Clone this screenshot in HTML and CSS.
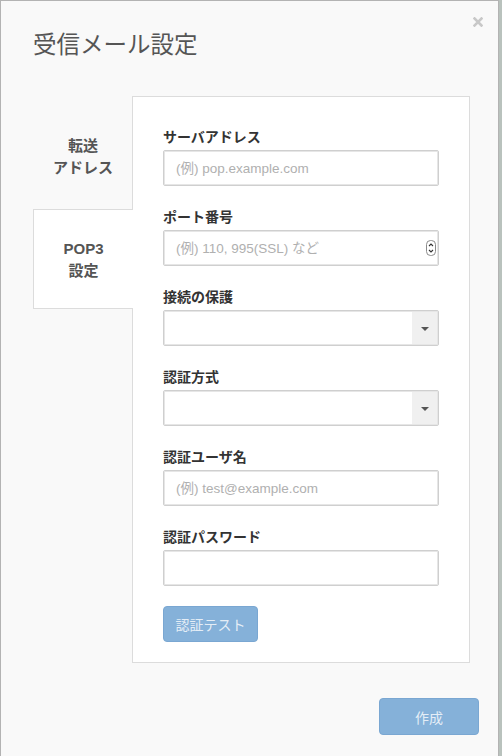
FILE: index.html
```html
<!DOCTYPE html>
<html lang="ja">
<head>
<meta charset="utf-8">
<title>受信メール設定</title>
<link rel="stylesheet" href="styles.css">
</head>
<body>
<div class="modal">
  <div class="modal-header">
    <h1 class="modal-title">受信メール設定</h1>
    <span class="close">
      <svg width="10" height="10" viewBox="0 0 10 10"><path d="M1.5 1.5 L8.5 8.5 M8.5 1.5 L1.5 8.5" stroke="#c8c8c8" stroke-width="2.6" stroke-linecap="square"/></svg>
    </span>
  </div>
  <div class="modal-body">
    <div class="tabs">
      <div class="tab">転送<br>アドレス</div>
      <div class="tab active">POP3<br>設定</div>
    </div>
    <div class="panel">
      <div class="field">
        <label class="label">サーバアドレス</label>
        <input class="input" type="text" placeholder="(例) pop.example.com">
      </div>
      <div class="field">
        <label class="label">ポート番号</label>
        <div class="input-wrap">
          <input class="input" type="text" placeholder="(例) 110, 995(SSL) など">
          <span class="spinner">
            <svg width="10" height="16" viewBox="0 0 10 16"><rect x="0.5" y="0.5" width="9" height="15" rx="4" fill="#fff" stroke="#8a8a8a"/><path d="M3 6 L5 4 L7 6 M3 10 L5 12 L7 10" fill="none" stroke="#333" stroke-width="1.1"/></svg>
          </span>
        </div>
      </div>
      <div class="field">
        <label class="label">接続の保護</label>
        <div class="select"><span class="select-value"></span><span class="select-arrow"><span class="caret"></span></span></div>
      </div>
      <div class="field">
        <label class="label">認証方式</label>
        <div class="select"><span class="select-value"></span><span class="select-arrow"><span class="caret"></span></span></div>
      </div>
      <div class="field">
        <label class="label">認証ユーザ名</label>
        <input class="input" type="text" placeholder="(例) test@example.com">
      </div>
      <div class="field">
        <label class="label">認証パスワード</label>
        <input class="input" type="password">
      </div>
      <button class="btn btn-small" type="button">認証テスト</button>
    </div>
  </div>
  <div class="modal-footer">
    <button class="btn btn-create" type="button">作成</button>
  </div>
</div>
</body>
</html>
```

FILE: styles.css
```css
html, body {
  margin: 0;
  padding: 0;
}
body {
  background: #b9c2bd;
  font-family: "Liberation Sans", "Noto Sans CJK JP", sans-serif;
  width: 502px;
  height: 756px;
  overflow: hidden;
}
.modal {
  box-sizing: border-box;
  width: 499px;
  height: 756px;
  background: #f9f9f9;
  border: 1px solid #b3b3b3;
  border-bottom: none;
  position: relative;
}
.modal-header {
  height: 95px;
  padding-left: 32px;
  box-sizing: border-box;
  padding-top: 27px;
}
.modal-title {
  margin: 0;
  font-family: "Noto Sans CJK JP", sans-serif;
  font-size: 23.5px;
  font-weight: 400;
  color: #555;
  line-height: 30px;
}
.close {
  position: absolute;
  top: 16px;
  left: 472px;
  width: 10px;
  height: 10px;
  display: block;
}
.close svg { display: block; }
.modal-body {
  display: flex;
  padding-left: 32px;
}
.tabs {
  width: 100px;
  margin-right: -1px;
  display: flex;
  flex-direction: column;
  position: relative;
  z-index: 1;
}
.tab {
  box-sizing: border-box;
  height: 113px;
  display: flex;
  align-items: center;
  justify-content: center;
  text-align: center;
  font-family: "Liberation Sans", "Noto Sans CJK JP", sans-serif;
  font-weight: 700;
  font-size: 15px;
  line-height: 22px;
  color: #555;
  padding-top: 8px;
}
.tab.active {
  height: 100px;
  background: #fff;
  border: 1px solid #dcdcdc;
  border-right: none;
  padding-top: 2px;
}
.panel {
  box-sizing: border-box;
  width: 338px;
  height: 567px;
  background: #fff;
  border: 1px solid #dcdcdc;
  padding: 29px 30px 20px 30px;
}
.field {
  margin-bottom: 20px;
}
.label {
  display: block;
  font-family: "Noto Sans CJK JP", sans-serif;
  font-weight: 700;
  font-size: 14px;
  line-height: 20px;
  color: #333;
  margin-bottom: 4px;
}
.input {
  box-sizing: border-box;
  display: block;
  width: 276px;
  height: 36px;
  border: 1px solid #cfcfcf;
  border-radius: 2px;
  box-shadow: inset 0 0 0 1px #e6e6e6;
  padding: 0 12px;
  font-family: "Liberation Sans", "Noto Sans CJK JP", sans-serif;
  font-size: 13.5px;
  color: #333;
  background: #fff;
  outline: none;
}
.input::placeholder {
  color: #b0b0b0;
}
.input-wrap {
  position: relative;
  width: 276px;
}
.spinner {
  position: absolute;
  right: 3px;
  top: 10px;
  display: block;
  width: 10px;
  height: 16px;
}
.spinner svg { display: block; }
.select {
  box-sizing: border-box;
  width: 276px;
  height: 36px;
  border: 1px solid #cfcfcf;
  border-radius: 2px;
  box-shadow: inset 0 0 0 1px #e6e6e6;
  display: flex;
  background: #fff;
  overflow: hidden;
}
.select-value {
  flex: 1;
}
.select-arrow {
  width: 25px;
  background: #f0f0f0;
  display: flex;
  align-items: center;
  justify-content: center;
  margin: 1px 1px 1px 0;
}
.caret {
  width: 0;
  height: 0;
  border-left: 4px solid transparent;
  border-right: 4px solid transparent;
  border-top: 4px solid #555;
  margin-top: 1px;
}
.btn {
  box-sizing: border-box;
  border: 1px solid #7aa7d2;
  background: #85b1d9;
  color: rgba(255, 255, 255, 0.8);
  font-family: "Noto Sans CJK JP", sans-serif;
  font-size: 14px;
  border-radius: 4px;
  padding: 0;
  cursor: default;
}
.btn-small {
  width: 95px;
  height: 36px;
}
.modal-footer {
  display: flex;
  justify-content: flex-end;
  padding-right: 19px;
  padding-top: 35px;
}
.btn-create {
  width: 100px;
  height: 37px;
}
```
